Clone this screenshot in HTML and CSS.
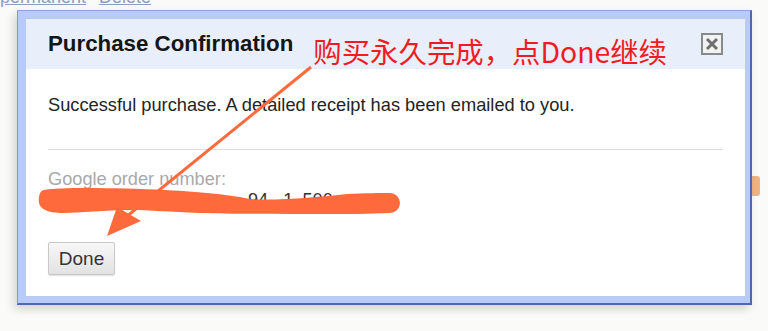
FILE: index.html
```html
<!DOCTYPE html>
<html lang="en">
<head>
<meta charset="utf-8">
<title>Purchase Confirmation</title>
<link rel="stylesheet" href="styles.css">
</head>
<body>
<div class="page">
  <div class="links"><a href="#" class="link">permanent</a> <a href="#" class="link">Delete</a></div>
  <div class="tag"></div>
  <div class="dialog">
    <div class="inner">
      <div class="header">
        <span class="title">Purchase Confirmation</span>
        <span class="note">购买永久完成，点Done继续</span>
        <span class="close"><svg width="14" height="14" viewBox="0 0 14 14"><path d="M2 2 L12 12 M12 2 L2 12" stroke="#6f6f6f" stroke-width="3" fill="none"/></svg></span>
      </div>
      <div class="body">
        <p class="msg">Successful purchase. A detailed receipt has been emailed to you.</p>
        <div class="sep"></div>
        <p class="label">Google order number:</p>
        <p class="order">94 -1 500</p>
        <button class="done">Done</button>
      </div>
    </div>
  </div>
  <svg class="overlay" width="768" height="331" viewBox="0 0 768 331">
    <path d="M44,190 C60,187 120,188 165,190 C205,192 230,195 250,199 C275,201 320,197 347,194 C365,193 380,193 390,193 A10,10 0 0 1 390,213 C370,214 345,214 330,214 C280,214 230,214 200,213 C170,212 150,210 130,210 C105,210 80,213 63,213 C55,213 41,212 39,203 C38,195 41,190 44,190 Z" fill="#ff6a3c"/>
    <path d="M311,67 L126,217" stroke="#ff6a3c" stroke-width="3" fill="none"/>
    <polygon points="107,236 117,207 141,221" fill="#ff6a3c"/>
  </svg>
</div>
</body>
</html>
```
FILE: styles.css
```css
html, body {
  margin: 0;
  padding: 0;
}
body {
  background: #fafaf8;
  font-family: "Liberation Sans", Arial, sans-serif;
  width: 768px;
  height: 331px;
  overflow: hidden;
}
.page {
  position: relative;
  width: 768px;
  height: 331px;
  overflow: hidden;
}
.links {
  height: 20px;
  line-height: 20px;
  margin-top: -13px;
  font-size: 18px;
  color: #8d9dc0;
  white-space: nowrap;
}
.link {
  color: #8d9dc0;
  text-decoration: underline;
}
.link + .link {
  margin-left: 8px;
}
.tag {
  position: absolute;
  left: 748px;
  top: 176px;
  width: 12px;
  height: 20px;
  border-radius: 3px;
  background: #f2b384;
}
.dialog {
  position: relative;
  margin: 3px 0 0 17px;
  width: 735px;
  box-sizing: border-box;
  background: #b7cbf6;
  border-top: 1px solid #8ea5dc;
  border-left: 1px solid #7f97d2;
  border-right: 2px solid #5069aa;
  border-bottom: 2px solid #5069aa;
  padding: 8px 5px 7px 8px;
  box-shadow: -3px 4px 9px rgba(0, 0, 0, 0.16);
}
.inner {
  background: #ffffff;
  height: 277px;
}
.header {
  height: 50px;
  background: #e8eefa;
  display: flex;
  align-items: center;
  padding: 0 22px;
}
.title {
  font-weight: bold;
  font-size: 22.3px;
  color: #151515;
}
.note {
  margin-left: 20px;
  margin-top: 14px;
  font-family: "Noto Sans CJK SC", "Liberation Sans", sans-serif;
  font-size: 28.4px;
  color: #f01c24;
  line-height: 1.2;
}
.close {
  margin-left: auto;
  width: 18px;
  height: 18px;
  border: 2px solid #8a8a8a;
  background: #f2f2f2;
  display: flex;
  align-items: center;
  justify-content: center;
}
.body {
  padding: 25px 22px 0 22px;
}
.msg {
  margin: 0;
  font-size: 18.25px;
  line-height: 21px;
  color: #242424;
}
.sep {
  margin-top: 34px;
  height: 1px;
  background: #dddddd;
}
.label {
  margin: 19px 0 0 0;
  font-size: 18.2px;
  line-height: 21px;
  color: #a9a9a9;
}
.order {
  margin: 0;
  font-size: 18.2px;
  line-height: 21px;
  color: #333333;
  padding-left: 200px;
  word-spacing: 4px;
}
.done {
  margin-top: 31px;
  display: block;
  width: 67px;
  height: 33px;
  padding: 0;
  font-family: "Liberation Sans", Arial, sans-serif;
  font-size: 19px;
  color: #333333;
  border: 1px solid #c8c8c8;
  border-radius: 2px;
  background: linear-gradient(#f7f7f7, #e2e2e2);
  box-shadow: 0 1px 1px rgba(0, 0, 0, 0.12);
}
.overlay {
  position: absolute;
  left: 0;
  top: 0;
  pointer-events: none;
}
```
